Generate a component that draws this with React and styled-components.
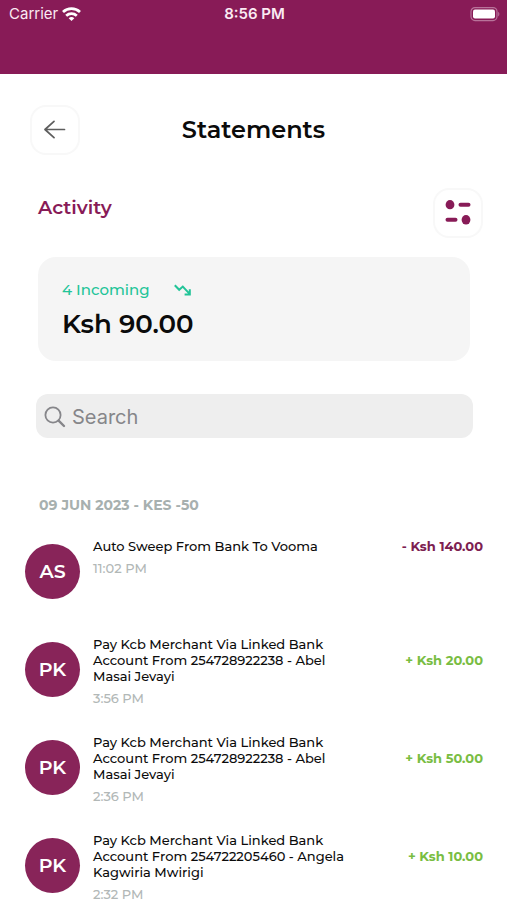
import React from "react";
import styled, { createGlobalStyle } from "styled-components";

const GlobalStyle = createGlobalStyle`
  *, *::before, *::after { box-sizing: border-box; }
  body {
    margin: 0;
    background: #fff;
    color: #0b0b0b;
    font-family: Montserrat, Inter, "Open Sans", sans-serif;
  }
  button, input { font: inherit; color: inherit; }
  h1, h2, h3, p, ul { margin: 0; padding: 0; }
`;

const Screen = styled.div`
  display: flex;
  flex-direction: column;
  height: 100vh;
  overflow: hidden;
`;

const Banner = styled.header`
  flex: none;
  height: 74px;
  padding: 4px 7px 0 9px;
  background: #881b57;
  color: #fbeaf3;
`;

const StatusBar = styled.div`
  display: grid;
  grid-template-columns: 1fr auto 1fr;
  align-items: center;
  height: 20px;
  font: 400 15px/20px Inter, sans-serif;
`;

const Carrier = styled.span`
  display: flex;
  align-items: center;
  gap: 4px;
`;

const Clock = styled.time`
  font-weight: 600;
`;

const BatteryIcon = styled.svg`
  justify-self: end;
`;

const Content = styled.main`
  flex: 1;
  min-height: 0;
  overflow-y: auto;
  scrollbar-width: none;
  padding: 31px 24px 0;
`;

const TitleBar = styled.div`
  display: grid;
  grid-template-columns: 50px 1fr 50px;
  align-items: center;
  padding: 0 6px;
`;

const Title = styled.h1`
  font-size: 24px;
  line-height: 32px;
  font-weight: 600;
  text-align: center;
`;

const IconButton = styled.button`
  display: flex;
  align-items: center;
  justify-content: center;
  width: 50px;
  height: 50px;
  padding: 0;
  border: 2px solid #f8f8f8;
  border-radius: 16px;
  background: #fff;
  color: ${({ $color }) => $color};
  cursor: pointer;
`;

const SectionBar = styled.div`
  display: flex;
  align-items: flex-start;
  justify-content: space-between;
  padding-left: 14px;
  margin-top: 33px;
`;

const SectionTitle = styled.h2`
  margin-top: 8px;
  font-size: 19px;
  line-height: 24px;
  font-weight: 600;
  color: #881b57;
`;

const SummaryCard = styled.section`
  margin: 19px 13px 0 14px;
  padding: 21px 24px 19px;
  border-radius: 18px;
  background: #f5f5f5;
`;

const Incoming = styled.p`
  display: flex;
  align-items: center;
  gap: 24px;
  font-size: 15px;
  line-height: 24px;
  font-weight: 500;
  color: #22c498;
`;

const Total = styled.p`
  margin-top: 4px;
  font-size: 26px;
  line-height: 36px;
  font-weight: 600;
`;

const SearchField = styled.label`
  display: flex;
  align-items: center;
  gap: 6px;
  height: 44px;
  margin: 33px 10px 0 12px;
  padding: 2px 8px 0;
  border-radius: 12px;
  background: #eee;
  color: #86868a;
`;

const SearchInput = styled.input`
  flex: 1;
  min-width: 0;
  padding: 0;
  border: 0;
  outline: 0;
  background: none;
  font: 400 20px/28px Inter, sans-serif;
  &::placeholder { color: #86868a; opacity: 1; }
`;

const DayHeading = styled.h3`
  margin: 57px 0 0 15px;
  font-size: 14px;
  line-height: 20px;
  font-weight: 700;
  color: #a7b0af;
`;

const Transactions = styled.ul`
  margin-top: 23px;
  padding-left: 1px;
  list-style: none;
`;

const Transaction = styled.li`
  display: grid;
  grid-template-columns: 56px minmax(0, 260px) 1fr;
  column-gap: 12px;
  grid-template-rows: auto 1fr;
  min-height: 98px;
`;

const Avatar = styled.span`
  grid-row: 1 / 3;
  display: flex;
  align-items: center;
  justify-content: center;
  width: 55px;
  height: 55px;
  margin-top: 6px;
  border-radius: 50%;
  background: #882459;
  color: #fff;
  font-size: 19px;
  font-weight: 600;
`;

const Description = styled.p`
  font-size: 13px;
  line-height: 16px;
  font-weight: 500;
`;

const Amount = styled.span`
  align-self: center;
  justify-self: end;
  white-space: nowrap;
  font-size: 13px;
  line-height: 16px;
  font-weight: 700;
  color: ${({ $incoming }) => ($incoming ? "#79bd42" : "#7c2050")};
`;

const Time = styled.time`
  grid-column: 2;
  margin-top: 8px;
  font-size: 13px;
  line-height: 12px;
  font-weight: 500;
  color: #b2b8b7;
`;

const WifiIcon = () => (
  <svg width="19" height="15" viewBox="0 0 19 15" fill="none" stroke="#fff" strokeWidth="2.8" aria-hidden="true">
    <path d="M1 5C5.8 .6 13.2 .6 18 5" />
    <path d="M4.2 8.7C7.2 6 11.8 6 14.8 8.7" />
    <path d="M9.5 14 6.7 11.2C8.2 9.7 10.8 9.7 12.3 11.2Z" fill="#fff" stroke="none" />
  </svg>
);

const ArrowIcon = () => (
  <svg width="22" height="20" viewBox="0 0 22 20" fill="none" stroke="currentColor" strokeWidth="1.7" strokeLinecap="round" strokeLinejoin="round" aria-hidden="true">
    <path d="M20.5 9.5H1M10 1.3 1 9.5 10 17.7" />
  </svg>
);

const FilterIcon = () => (
  <svg width="28" height="26" viewBox="0 0 28 26" fill="currentColor" aria-hidden="true">
    <ellipse cx="6" cy="4.7" rx="4.4" ry="4.6" />
    <rect x="14.5" y="2.7" width="12" height="4" rx="2" />
    <rect x="1.5" y="17.8" width="12" height="4" rx="2" />
    <ellipse cx="22" cy="19.8" rx="4.4" ry="4.8" />
  </svg>
);

const TrendIcon = () => (
  <svg width="17" height="12" viewBox="0 0 17 12" fill="none" stroke="currentColor" strokeWidth="2" aria-hidden="true">
    <path d="M.8 1.2 5.2 5.8 8.8 2.6 15.4 9.6M15.8 5.2V10.4H10.6" />
  </svg>
);

const SearchIcon = () => (
  <svg width="22" height="22" viewBox="0 0 22 22" fill="none" stroke="currentColor" strokeWidth="1.8" strokeLinecap="round" aria-hidden="true">
    <circle cx="9" cy="9" r="7.6" />
    <path d="m14.6 14.6 5.4 5.4" strokeWidth="2.4" />
  </svg>
);

const transactions = [
  { initials: "AS", text: "Auto Sweep From Bank To Vooma", time: "11:02 PM", amount: "- Ksh 140.00" },
  { initials: "PK", text: "Pay Kcb Merchant Via Linked Bank Account From 254728922238 - Abel Masai Jevayi", time: "3:56 PM", amount: "+ Ksh 20.00", incoming: true },
  { initials: "PK", text: "Pay Kcb Merchant Via Linked Bank Account From 254728922238 - Abel Masai Jevayi", time: "2:36 PM", amount: "+ Ksh 50.00", incoming: true },
  { initials: "PK", text: "Pay Kcb Merchant Via Linked Bank Account From 254722205460 - Angela Kagwiria Mwirigi", time: "2:32 PM", amount: "+ Ksh 10.00", incoming: true },
];

export default function App() {
  return (
    <>
      <GlobalStyle />
      <Screen>
        <Banner>
          <StatusBar>
            <Carrier>Carrier <WifiIcon /></Carrier>
            <Clock>8:56 PM</Clock>
            <BatteryIcon width="30" height="15" viewBox="0 0 30 15" role="img" aria-label="Battery full">
              <rect x="1" y=".6" width="26" height="13" rx="4" fill="none" stroke="#b8739a" strokeWidth="1.2" />
              <rect x="3" y="2.6" width="22" height="9" rx="2" fill="#fff" />
              <path d="M28.2 4.8v4.6c1.6-.8 1.6-3.8 0-4.6Z" fill="#b8739a" />
            </BatteryIcon>
          </StatusBar>
        </Banner>
        <Content>
          <TitleBar>
            <IconButton $color="#5e5e5e" aria-label="Back"><ArrowIcon /></IconButton>
            <Title>Statements</Title>
          </TitleBar>
          <SectionBar>
            <SectionTitle>Activity</SectionTitle>
            <IconButton $color="#881b57" aria-label="Filter"><FilterIcon /></IconButton>
          </SectionBar>
          <SummaryCard>
            <Incoming>4 Incoming <TrendIcon /></Incoming>
            <Total>Ksh 90.00</Total>
          </SummaryCard>
          <SearchField>
            <SearchIcon />
            <SearchInput type="search" placeholder="Search" aria-label="Search" />
          </SearchField>
          <DayHeading>09 JUN 2023 - KES -50</DayHeading>
          <Transactions>
            {transactions.map((t) => (
              <Transaction key={t.time}>
                <Avatar>{t.initials}</Avatar>
                <Description>{t.text}</Description>
                <Amount $incoming={t.incoming}>{t.amount}</Amount>
                <Time>{t.time}</Time>
              </Transaction>
            ))}
          </Transactions>
        </Content>
      </Screen>
    </>
  );
}
